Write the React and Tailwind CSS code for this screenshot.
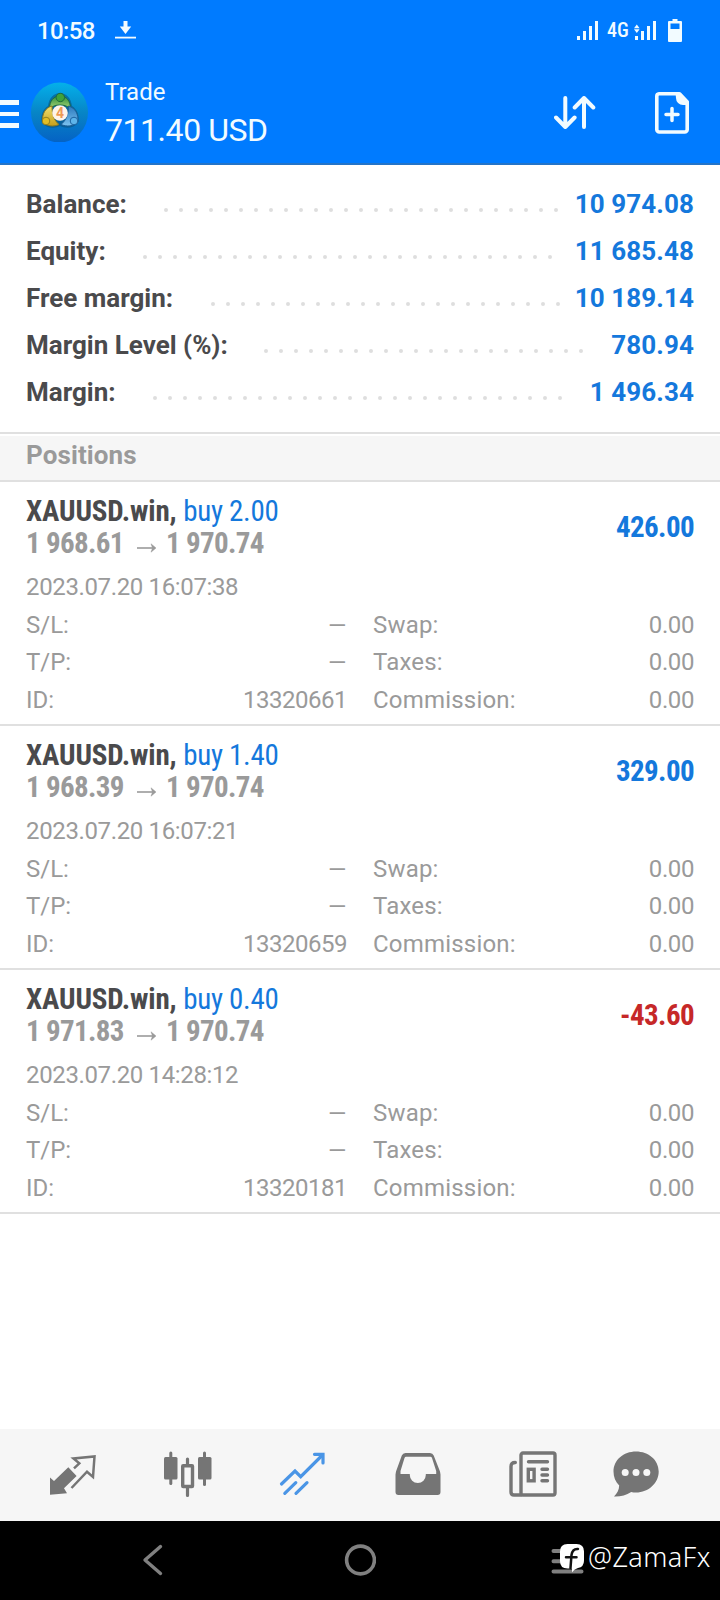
import React from 'react';

const summary = [
  { label: 'Balance:', value: '10 974.08', from: 163.5, dots: 27 },
  { label: 'Equity:', value: '11 685.48', from: 142.5, dots: 28 },
  { label: 'Free margin:', value: '10 189.14', from: 210.5, dots: 24 },
  { label: 'Margin Level (%):', value: '780.94', from: 263.5, dots: 22 },
  { label: 'Margin:', value: '1 496.34', from: 152.5, dots: 28 },
];

const positions = [
  { id: '13320661', volume: '2.00', open: '1 968.61', current: '1 970.74', time: '2023.07.20 16:07:38', profit: '426.00' },
  { id: '13320659', volume: '1.40', open: '1 968.39', current: '1 970.74', time: '2023.07.20 16:07:21', profit: '329.00' },
  { id: '13320181', volume: '0.40', open: '1 971.83', current: '1 970.74', time: '2023.07.20 14:28:12', profit: '-43.60' },
];

function StatusBar() {
  return (
    <div className="flex h-[62px] items-center pl-[37px] pr-[38px]">
      <span className="w-[58px] text-[24px] font-medium tracking-[-0.6px] leading-[62px] whitespace-nowrap">10:58</span>
      <svg className="-mt-0.5 ml-5 w-[21px] h-[18px]" viewBox="0 0 21 18" fill="currentColor">
        <path d="M8.500 0h4v5.500h3.700L10.500 13 4.800 5.500h3.700z" />
        <path d="M0 15.700h21v1.800H0z" />
      </svg>
      <svg className="-mt-0.5 ml-auto w-[22px] h-[20px]" viewBox="0 0 22 20" fill="currentColor">
        <path d="M0 16h3v4H0zM6 11h3v9H6zM12 6h3v14h-3zM18 1h3v19h-3z" />
      </svg>
      <span className="-mt-0.5 ml-2 w-[21px] text-[20px] font-medium [font-stretch:75%] leading-[62px]">4G</span>
      <svg className="-mt-0.5 ml-[6px] w-[22px] h-[20px]" viewBox="0 0 22 20" fill="currentColor">
        <path d="M1 16h3v4H1zM7 11h3v9H7zM13 6h3v14h-3zM19 1h3v19h-3z" />
        <path d="M2.800 4.500l2.800 3.800H0zM2.800 13L0 9.300h5.600z" />
      </svg>
      <svg className="-mt-0.5 ml-[12px] w-[14px] h-[23px]" viewBox="0 0 14 23">
        <path fill="currentColor" fillRule="evenodd" d="M4.500 0h5v2H13a1 1 0 0 1 1 1v19a1 1 0 0 1-1 1H1a1 1 0 0 1-1-1V3a1 1 0 0 1 1-1h3.500zM2.500 4.500v5.500h9V4.500z" />
      </svg>
    </div>
  );
}

function Logo() {
  return (
    <svg className="w-[58px] h-[60px]" viewBox="0 0 58 60">
      <defs>
        <linearGradient id="disc" x1="0" y1="0" x2="0" y2="1">
          <stop offset="0" stopColor="#04b0ea" />
          <stop offset="0.5" stopColor="#0785c6" />
          <stop offset="1" stopColor="#0562c4" />
        </linearGradient>
        <linearGradient id="green" x1="0" y1="0" x2="0" y2="1">
          <stop offset="0" stopColor="#2f8f3c" />
          <stop offset="1" stopColor="#a8d678" />
        </linearGradient>
        <linearGradient id="yellow" x1="0" y1="0" x2="0" y2="1">
          <stop offset="0" stopColor="#f0e070" />
          <stop offset="1" stopColor="#c79f1a" />
        </linearGradient>
        <linearGradient id="blue" x1="0" y1="0" x2="0" y2="1">
          <stop offset="0" stopColor="#2a78bd" />
          <stop offset="1" stopColor="#7cc3f0" />
        </linearGradient>
      </defs>
      <ellipse cx="28.500" cy="30.500" rx="28.500" ry="30" fill="url(#disc)" />
      <path d="M29 11c6 0 11 5 12 13 5 3 8 10 6 17-4 5-12 6-18 3-6 3-14 2-18-3-2-7 1-14 6-17 1-8 6-13 12-13z" fill="#08527e" opacity="0.6" />
      <path d="M18.500 27c0-8 4-13 10.500-13s10.500 5 10.500 13c-3-3-6-4-10.500-4s-7.500 1-10.500 4z" fill="url(#green)" stroke="#1d6b3f" />
      <path d="M21 24c-7 2-10 8-9.500 16 5 4.500 11 5 16.500 2.500-5-4-7-10-7-18.500z" fill="url(#yellow)" stroke="#8f7c1c" />
      <path d="M37.500 24c7 2 10 8 9.500 16-5 4.500-11 5-17 2.500 5-4 7.500-10 7.500-18.500z" fill="url(#blue)" stroke="#1c5f98" />
      <circle cx="29.300" cy="15.500" r="4.200" fill="#3fa23a" stroke="#1f6b3a" />
      <circle cx="15" cy="39" r="3.800" fill="#e3be25" stroke="#94801c" />
      <circle cx="43" cy="39" r="3.800" fill="#5db4ea" stroke="#1c62a0" />
      <circle cx="29" cy="31" r="7.800" fill="#fff4ea" />
      <text x="29" y="36" textAnchor="middle" fontSize="14" fontWeight="700" fill="#ef9a55">4</text>
    </svg>
  );
}

function Header() {
  return (
    <header className="h-[165px] bg-[#007bff] text-[#f2fbff] border-b-2 border-[#2474c8]">
      <StatusBar />
      <div className="flex h-[101px] items-start">
        <div className="mt-[38px] flex w-[19px] flex-col gap-[7px]">
          <span className="h-[4.5px] bg-current" />
          <span className="h-[4.5px] bg-current" />
          <span className="h-[4.5px] bg-current" />
        </div>
        <div className="ml-3 mt-5">
          <Logo />
        </div>
        <div className="ml-4 mt-[14px] whitespace-nowrap">
          <div className="text-[24px] leading-[32px]">Trade</div>
          <div className="text-[32px] leading-[44px] tracking-[-0.45px]">711.40 USD</div>
        </div>
        <svg className="ml-auto mt-[33px] w-[42px] h-[35px]" viewBox="0 0 42 35" fill="none" stroke="currentColor" strokeWidth="4" strokeLinecap="round" strokeLinejoin="round">
          <path d="M11.300 3v29M2 22.500l9.300 9.500 9.300-9.500" />
          <path d="M30 32V3M20.700 12.500L30 3l9.300 9.500" />
        </svg>
        <svg className="ml-[58.5px] mr-[31.5px] mt-[30px] w-[34px] h-[42px]" viewBox="0 0 34 42">
          <path d="M4 1.800h20.500L32.200 10v27.500a2.500 2.500 0 0 1-2.500 2.500H4.300a2.500 2.500 0 0 1-2.500-2.500V4.200A2.400 2.400 0 0 1 4 1.800z" fill="none" stroke="currentColor" strokeWidth="3.600" strokeLinejoin="round" />
          <path d="M20.500 1h5L33.500 9v4H28a7 7 0 0 1-7-7z" fill="currentColor" />
          <path d="M17 16.500v12M11 22.500h12" stroke="currentColor" strokeWidth="3.500" strokeLinecap="round" />
        </svg>
      </div>
    </header>
  );
}

function SummaryRow({ label, value, from, dots }) {
  return (
    <div className="relative flex h-[47px] items-center justify-between px-[26px] text-[26px] leading-[47px] font-bold whitespace-nowrap">
      <span className="text-[#4a4a4c]">{label}</span>
      <div className="absolute top-[26.5px] flex gap-[11px]" style={{ left: from }}>
        {Array.from({ length: dots }, (_, i) => (
          <span key={i} className="size-1 rounded-full bg-[#dedede]" />
        ))}
      </div>
      <span className="tracking-[0.1px] text-[#1478dc]">{value}</span>
    </div>
  );
}

function Position({ id, volume, open, current, time, profit }) {
  const rows = [
    ['S/L:', '–', 'Swap:'],
    ['T/P:', '–', 'Taxes:'],
    ['ID:', id, 'Commission:'],
  ];
  return (
    <div className="h-[244px] border-b-2 border-[#e0e0e0] px-[26px] pt-[13px] whitespace-nowrap">
      <div className="flex justify-between text-[29px] [font-stretch:75%]">
        <div className="leading-[32px]">
          <div>
            <span className="font-bold tracking-[-0.15px] text-[#4a4a4c]">XAUUSD.win,</span>{' '}
            <span className="tracking-[-0.3px] text-[#1478dc]">buy {volume}</span>
          </div>
          <div className="flex items-center font-bold tracking-[-0.68px] text-[#9a9a9a]">
            <span>{open}</span>
            <svg className="ml-[13px] mr-[9.500px] mt-2.5 w-5 h-3" viewBox="0 0 20 12" fill="none" stroke="currentColor" strokeWidth="1.600">
              <path d="M0 6h18" />
              <path d="M14 1.800l5 4.200-5 4.200 1.500-4.200z" fill="currentColor" strokeWidth="0.500" />
            </svg>
            <span>{current}</span>
          </div>
        </div>
        <div className={`leading-[64px] font-bold tracking-[-0.6px] ${profit.startsWith('-') ? 'text-[#c62828]' : 'text-[#1478dc]'}`}>{profit}</div>
      </div>
      <div className="mt-[9px] text-[24px] text-[#9a9a9a]">
        <div className="h-[38.5px] leading-[38px] tracking-[-0.36px]">{time}</div>
        {rows.map(([left, value, right]) => (
          <div key={left} className="flex h-[37.5px] leading-[37.5px]">
            <div className="flex w-[321px] justify-between">
              <span>{left}</span>
              {value === '–' ? (
                <span className="mt-px -mr-px scale-x-130 origin-right">{value}</span>
              ) : (
                <span className="tracking-[-0.5px]">{value}</span>
              )}
            </div>
            <div className="ml-[26px] flex flex-1 justify-between">
              <span className="tracking-[0.2px]">{right}</span>
              <span className="tracking-[-0.4px]">0.00</span>
            </div>
          </div>
        ))}
      </div>
    </div>
  );
}

function TabBar() {
  return (
    <nav className="flex h-[92px] items-center bg-[#f6f6f6] pl-[49px] text-[#757575]">
      <svg className="size-12" viewBox="0 0 48 48">
        <path d="M1 26.500L5 30l14.300-13.700 8.300 8.700L15 37.300l3 5L1 43.700z" fill="currentColor" />
        <path d="M25 17.300l5.300-5-5.800-4.800 21-2-1.500 20.500-6-5.300L22.500 37" fill="none" stroke="currentColor" strokeWidth="2.500" />
      </svg>
      <svg className="ml-[67px] size-12" viewBox="0 0 48 48" fill="currentColor">
        <rect x="0" y="6" width="13.500" height="22.500" rx="1.500" />
        <rect x="5.300" y="0.500" width="3" height="33.500" rx="1.500" />
        <rect x="34" y="6" width="13.500" height="22.500" rx="1.500" />
        <rect x="39" y="0.500" width="3" height="34.500" rx="1.500" />
        <path d="M23.500 8V14M23.500 36v8.500" stroke="currentColor" strokeWidth="3.200" strokeLinecap="round" />
        <rect x="18.700" y="14.700" width="9.800" height="20.800" rx="0.500" fill="none" stroke="currentColor" strokeWidth="3.400" />
      </svg>
      <svg className="ml-[66.5px] size-12 text-[#4a95e6]" viewBox="0 0 48 48" fill="none" stroke="currentColor" strokeWidth="3.200" strokeLinecap="round">
        <path d="M2.500 33L16 20l5.700 5.700L43.500 4" />
        <path d="M35.500 3.300h8.500V12" />
        <path d="M5.800 42.300l11-10.700M17 42.300l11-10.700" />
      </svg>
      <svg className="ml-[67px] size-12" viewBox="0 0 48 48" fill="currentColor">
        <path fillRule="evenodd" d="M11.500 2h24.500a4 4 0 0 1 3.700 2.500L46 20.500l.5 3V41a3 3 0 0 1-3 3h-39a3 3 0 0 1-3-3V23.500l.5-3L7.800 4.500A4 4 0 0 1 11.500 2zM12 5.700q-1 0-1.500 1.300L6.500 20v3h9.300v1a8 8 0 0 0 16 0v-1h10.400v-3L38 7q-.5-1.300-1.500-1.300z" />
      </svg>
      <svg className="ml-[67.5px] size-12" viewBox="0 0 48 48" fill="none" stroke="currentColor" strokeWidth="3.400" strokeLinecap="round">
        <rect x="12" y="2" width="34" height="42" rx="2" />
        <path d="M6.300 11.500q-4.300 0-4.300 4V41q0 3 3 3h7" />
        <path d="M19.500 10.700h19M33 18.300h5.500M33 24h5.500M33 29.700h5.500" />
        <rect x="19.300" y="18.300" width="5.800" height="11.500" />
      </svg>
      <svg className="ml-[55px] size-12" viewBox="0 0 48 48">
        <path fill="currentColor" d="M24 .5c12.500 0 22.700 8.500 22.700 20S36.500 41.500 24 41.500c-1.800 0-3.300-.2-4.800-.6C14 44 8.500 45.800 2 45.500c3.200-3.200 5-6.500 5.200-11C3.500 31 1.500 26 1.500 20.500 1.500 9 11.500.5 24 .5z" />
        <circle cx="13.200" cy="21.500" r="3.500" fill="#f6f6f6" />
        <circle cx="24" cy="21.500" r="3.500" fill="#f6f6f6" />
        <circle cx="34.800" cy="21.500" r="3.500" fill="#f6f6f6" />
      </svg>
    </nav>
  );
}

function SystemNav() {
  return (
    <div className="relative flex h-[79px] items-center bg-black pb-px pl-[142px] text-[#808080]">
      <svg className="w-[22px] h-[32px]" viewBox="0 0 22 32" fill="none" stroke="currentColor" strokeWidth="3.400" strokeLinecap="round" strokeLinejoin="round">
        <path d="M18.500 2.500L3 16l15.500 13.500" />
      </svg>
      <svg className="ml-[180px] size-8" viewBox="0 0 32 32" fill="none" stroke="currentColor" strokeWidth="3.600">
        <circle cx="16.500" cy="16" r="13.900" />
      </svg>
      <svg className="ml-[175px] mt-px w-[33px] h-[26px]" viewBox="0 0 33 26" stroke="currentColor" strokeWidth="4" strokeLinecap="round">
        <path d="M2.500 3h28M2.500 13.300h28M2.500 23.500h28" />
      </svg>
      <div className="absolute left-[560px] top-[21px] flex text-white">
        <svg className="mt-0.5 w-6 h-[29px]" viewBox="0 0 24 29">
          <path d="M7.500 0h9q7.500 0 7.500 7.500v9q0 6.500-6 7.500-3.500.8-6 4.300V24.500H7.500Q0 24.500 0 17V7.500Q0 0 7.500 0z" fill="#fff" />
          <path d="M18 5q-5.500-.5-6.500 6L10.500 24M6 13.300h10.500" fill="none" stroke="#111" strokeWidth="2.500" strokeLinecap="round" />
        </svg>
        <span className="ml-1 font-['Noto_Sans'] text-[27px] font-[350] tracking-[0.4px] leading-[30px]">@ZamaFx</span>
      </div>
    </div>
  );
}

export default function App() {
  return (
    <div className="flex h-[1600px] w-[720px] flex-col overflow-hidden bg-white font-[Roboto,sans-serif]">
      <Header />
      <section className="border-b-2 border-[#e0e0e0] py-4">
        {summary.map((row) => (
          <SummaryRow key={row.label} {...row} />
        ))}
      </section>
      <div className="mt-0.5 h-[46px] border-b-2 border-[#e0e0e0] bg-[#f6f6f6] px-[26px] text-[26px] leading-[38px] font-bold tracking-[0.1px] text-[#9a9a9a]">
        Positions
      </div>
      <main className="flex-1">
        {positions.map((p) => (
          <Position key={p.id} {...p} />
        ))}
      </main>
      <TabBar />
      <SystemNav />
    </div>
  );
}
